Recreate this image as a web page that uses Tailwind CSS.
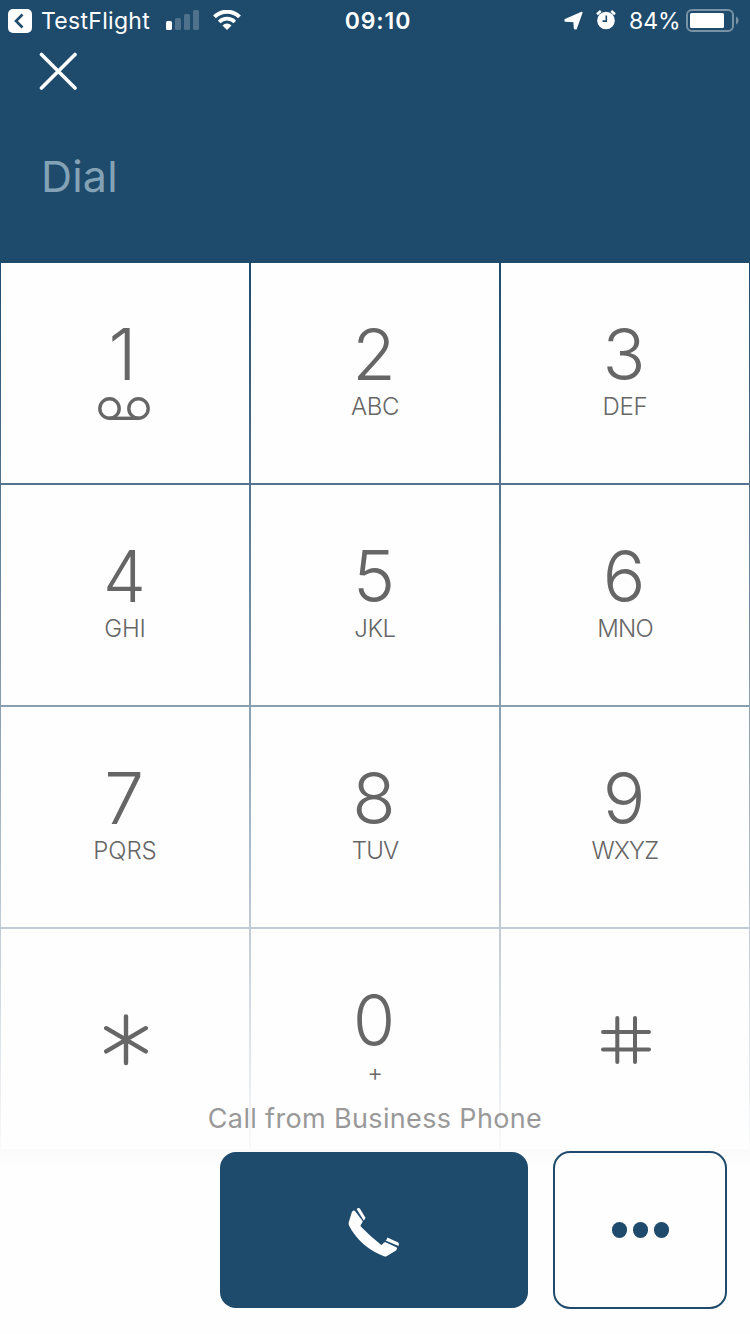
<!DOCTYPE html>
<html lang="en">
<head>
    <meta charset="UTF-8">
    <meta name="viewport" content="width=device-width, initial-scale=1.0">
    <title>Dial</title>
    <script src="https://cdn.jsdelivr.net/npm/@tailwindcss/browser@4"></script>
</head>
<body class="bg-white">
    <div class="w-[750px] h-[1334px] overflow-hidden bg-[#fefefe] font-['Inter',sans-serif]">
        <!-- Header -->
        <header class="h-[262px] bg-[#1e4a6c] text-white">
            <!-- Status bar -->
            <div class="h-10 grid grid-cols-[1fr_auto_1fr] items-center pl-2 pr-[11px]">
                <div class="flex items-center">
                    <svg class="w-6 h-6 mt-0.5" viewBox="0 0 24 24" fill="none">
                        <rect width="24" height="24" rx="5" fill="#fff" />
                        <path d="M14.500 5.500L8 12l6.500 6.500" stroke="#1e4a6c" stroke-width="2.600" />
                    </svg>
                    <span class="ml-[9px] mt-0.5 w-[111px] text-[23px] leading-9 tracking-[0.3px] font-[380] whitespace-nowrap">TestFlight</span>
                    <svg class="ml-[14px] w-[33px] h-5" viewBox="0 0 33 20" fill="#fff">
                        <rect x="0" y="11" width="6" height="9" rx="1.500" />
                        <rect x="9" y="8" width="6" height="12" rx="1.500" fill-opacity=".22" />
                        <rect x="18" y="4" width="6" height="16" rx="1.500" fill-opacity=".22" />
                        <rect x="27" y="0" width="6" height="20" rx="1.500" fill-opacity=".22" />
                    </svg>
                    <svg class="ml-[14px] w-7 h-5" viewBox="0 0 28 20" fill="none" stroke="#fff" stroke-width="4">
                        <path d="M1.500 6.900a17.600 17.600 0 0 1 25 0" />
                        <path d="M6.200 11.900a11 11 0 0 1 15.600 0" stroke-width="3.600" />
                        <path d="M14 20l-4.500-4.500a6.300 6.300 0 0 1 9 0z" fill="#fff" stroke="none" />
                    </svg>
                </div>
                <span class="ml-[9px] mt-0.5 text-[23px] leading-9 font-semibold tracking-[0.9px]">09:10</span>
                <div class="flex items-center justify-end">
                    <svg class="w-[19px] h-[19px]" viewBox="0 0 19 19" fill="#fff">
                        <path d="M17.800 1.500L12 17.800 10.600 17.500 10.100 10.400 1.300 9.900 1.300 8.800z" stroke="#fff" stroke-width="1.600" stroke-linejoin="round" />
                    </svg>
                    <svg class="ml-[13px] w-5 h-5" viewBox="0 0 20 20" fill="none">
                        <circle cx="10" cy="10.500" r="8.800" fill="#fff" />
                        <path d="M1 4.200L4.800 1M19 4.200L15.200 1" stroke="#fff" stroke-width="2.600" />
                        <path d="M10.300 5.500v5.600H6.500" stroke="#1e4a6c" stroke-width="1.600" />
                    </svg>
                    <span class="ml-[13px] mt-0.5 w-[50px] text-[23px] leading-9 font-[380] whitespace-nowrap">84%</span>
                    <svg class="ml-[7px] mt-px w-[53px] h-[23px]" viewBox="0 0 53 23" fill="none">
                        <rect x="1" y="1" width="46" height="21" rx="5" stroke="#fff" stroke-opacity=".4" stroke-width="2" />
                        <rect x="4" y="4" width="34" height="15" rx="1.500" fill="#fff" />
                        <path d="M50 7.500c3.400 1.500 3.400 6.500 0 8z" fill="#fff" fill-opacity=".4" />
                    </svg>
                </div>
            </div>

            <!-- Close -->
            <button class="block ml-[39px] mt-3 w-[38px] h-[38px]">
                <svg class="w-full h-full" viewBox="0 0 38 38" stroke="#fff" stroke-width="3.600" stroke-linecap="round">
                    <path d="M2.500 2.500l33.500 33.500M36 2.500L2.500 36" />
                </svg>
            </button>

            <div class="ml-[41px] mt-[58px] text-[43px] leading-[56px] tracking-[0.2px] font-[380] text-[#84a2b6]">Dial</div>
        </header>

        <!-- Keypad: the gaps let the gradient through as grid lines -->
        <main class="h-[888px] p-px grid grid-cols-3 grid-rows-4 gap-0.5 bg-linear-to-b from-[#1e4a6c] to-[#fafafa] text-[#666] font-light">
            <button class="bg-[#fefefe] flex flex-col items-center pt-[57px]">
                <span class="mr-[5px] text-[71px] leading-[68px]">1</span>
                <svg class="mt-[9px] mr-0.5 w-[52px] h-6" viewBox="0 0 52 24" fill="none" stroke="#666" stroke-width="3.400">
                    <circle cx="11.500" cy="11.500" r="9.700" />
                    <circle cx="40.500" cy="11.500" r="9.700" />
                    <path d="M11.500 21.300h29" />
                </svg>
            </button>
            <button class="bg-[#fefefe] flex flex-col items-center pt-[57px]">
                <span class="mr-0.5 text-[71px] leading-[68px]">2</span>
                <span class="mt-[5px] text-[24px] leading-7 tracking-[-0.4px]">ABC</span>
            </button>
            <button class="bg-[#fefefe] flex flex-col items-center pt-[57px]">
                <span class="mr-0.5 text-[71px] leading-[68px]">3</span>
                <span class="mt-[5px] text-[24px] leading-7 tracking-[-0.3px]">DEF</span>
            </button>
            <button class="bg-[#fefefe] flex flex-col items-center pt-[57px]">
                <span class="mr-0.5 text-[71px] leading-[68px] scale-x-96">4</span>
                <span class="mt-[5px] text-[24px] leading-7 tracking-[-0.2px]">GHI</span>
            </button>
            <button class="bg-[#fefefe] flex flex-col items-center pt-[57px]">
                <span class="mr-0.5 text-[71px] leading-[68px]">5</span>
                <span class="mt-[5px] text-[24px] leading-7 tracking-[-0.4px]">JKL</span>
            </button>
            <button class="bg-[#fefefe] flex flex-col items-center pt-[57px]">
                <span class="mr-0.5 text-[71px] leading-[68px]">6</span>
                <span class="mt-[5px] text-[24px] leading-7 tracking-[-0.8px]">MNO</span>
            </button>
            <button class="bg-[#fefefe] flex flex-col items-center pt-[57px]">
                <span class="mr-0.5 text-[71px] leading-[68px]">7</span>
                <span class="mt-[5px] text-[24px] leading-7 tracking-[-0.1px]">PQRS</span>
            </button>
            <button class="bg-[#fefefe] flex flex-col items-center pt-[57px]">
                <span class="mr-0.5 text-[71px] leading-[68px]">8</span>
                <span class="mt-[5px] text-[24px] leading-7 tracking-[-0.9px]">TUV</span>
            </button>
            <button class="bg-[#fefefe] flex flex-col items-center pt-[57px]">
                <span class="mr-0.5 text-[71px] leading-[68px]">9</span>
                <span class="mt-[5px] text-[24px] leading-7 tracking-[-0.8px]">WXYZ</span>
            </button>
            <button class="bg-[#fefefe] flex flex-col items-center pt-[85px]">
                <svg class="ml-0.5 w-11 h-[52px]" viewBox="0 0 44 52" stroke="#666" stroke-width="4.400" stroke-linecap="round">
                    <path d="M22 2.500v46.500M2.200 14.200l39.600 23.200M41.800 14.200L2.200 37.400" />
                </svg>
            </button>
            <button class="bg-[#fefefe] flex flex-col items-center pt-[57px]">
                <span class="mr-0.5 text-[71px] leading-[68px] scale-x-96">0</span>
                <span class="mt-[5px] text-[24px] leading-7">+</span>
            </button>
            <button class="bg-[#fefefe] flex flex-col items-center pt-[87px]">
                <svg class="ml-0.5 w-[50px] h-12" viewBox="0 0 50 48" stroke="#666" stroke-width="4" stroke-linecap="round">
                    <path d="M16.300 2v44M34 2v44M2 16h46M2 33.600h46" />
                </svg>
            </button>
        </main>

        <!-- Call bar, its label lies over the last keypad row -->
        <footer class="relative h-[184px] pl-[220px] pr-[23px] pt-px flex gap-[25px] bg-[linear-gradient(to_bottom,#fafafa,#fefefe_18px)]">
            <p class="absolute left-0 right-0 -top-[49px] text-center text-[27px] leading-9 tracking-[0.35px] font-[380] text-[#999]">Call from Business Phone</p>
            <button class="mt-px w-[308px] h-[156px] rounded-[16px] bg-[#1e4a6c] flex items-center justify-center">
                <svg class="mt-1 w-[52px] h-[50px]" viewBox="0 0 52 50" fill="#fff">
                    <path d="M5 3.700Q6 3 7 4L14.600 14Q15 14.600 14.400 15.300L12.600 18.300Q12.300 19 13 19.700Q22 29 33.300 38Q34.500 37.700 35.500 36Q36.300 34.800 37.500 35.300L48.500 40.300Q49.500 41 48.700 42.500L48 43.500L38.500 49.200Q37.500 49.700 36 49.200C22 44.500 7.500 32 1 18.500Q.400 17 .700 15.500L3.800 5.200Q4.200 4.200 5 3.700z" />
                    <path d="M8.600 2.100Q10.800 .200 12.200 2L17.300 10.500Q17.700 11.500 15.700 13.500z" />
                    <path d="M39.500 30.500Q40.500 31 50 35.300Q51.700 36.300 50.500 39L37.500 33.600Q38.700 33 39.500 30.500z" />
                </svg>
            </button>
            <button class="w-[174px] h-[158px] rounded-[17px] border-2 border-[#1e4a6c] bg-[#fefefe] flex items-center justify-center gap-[5.500px] pl-px">
                <span class="w-[15.500px] h-[15.500px] rounded-full bg-[#1e4a6c]"></span>
                <span class="w-[15.500px] h-[15.500px] rounded-full bg-[#1e4a6c]"></span>
                <span class="w-[15.500px] h-[15.500px] rounded-full bg-[#1e4a6c]"></span>
            </button>
        </footer>
    </div>
</body>
</html>
